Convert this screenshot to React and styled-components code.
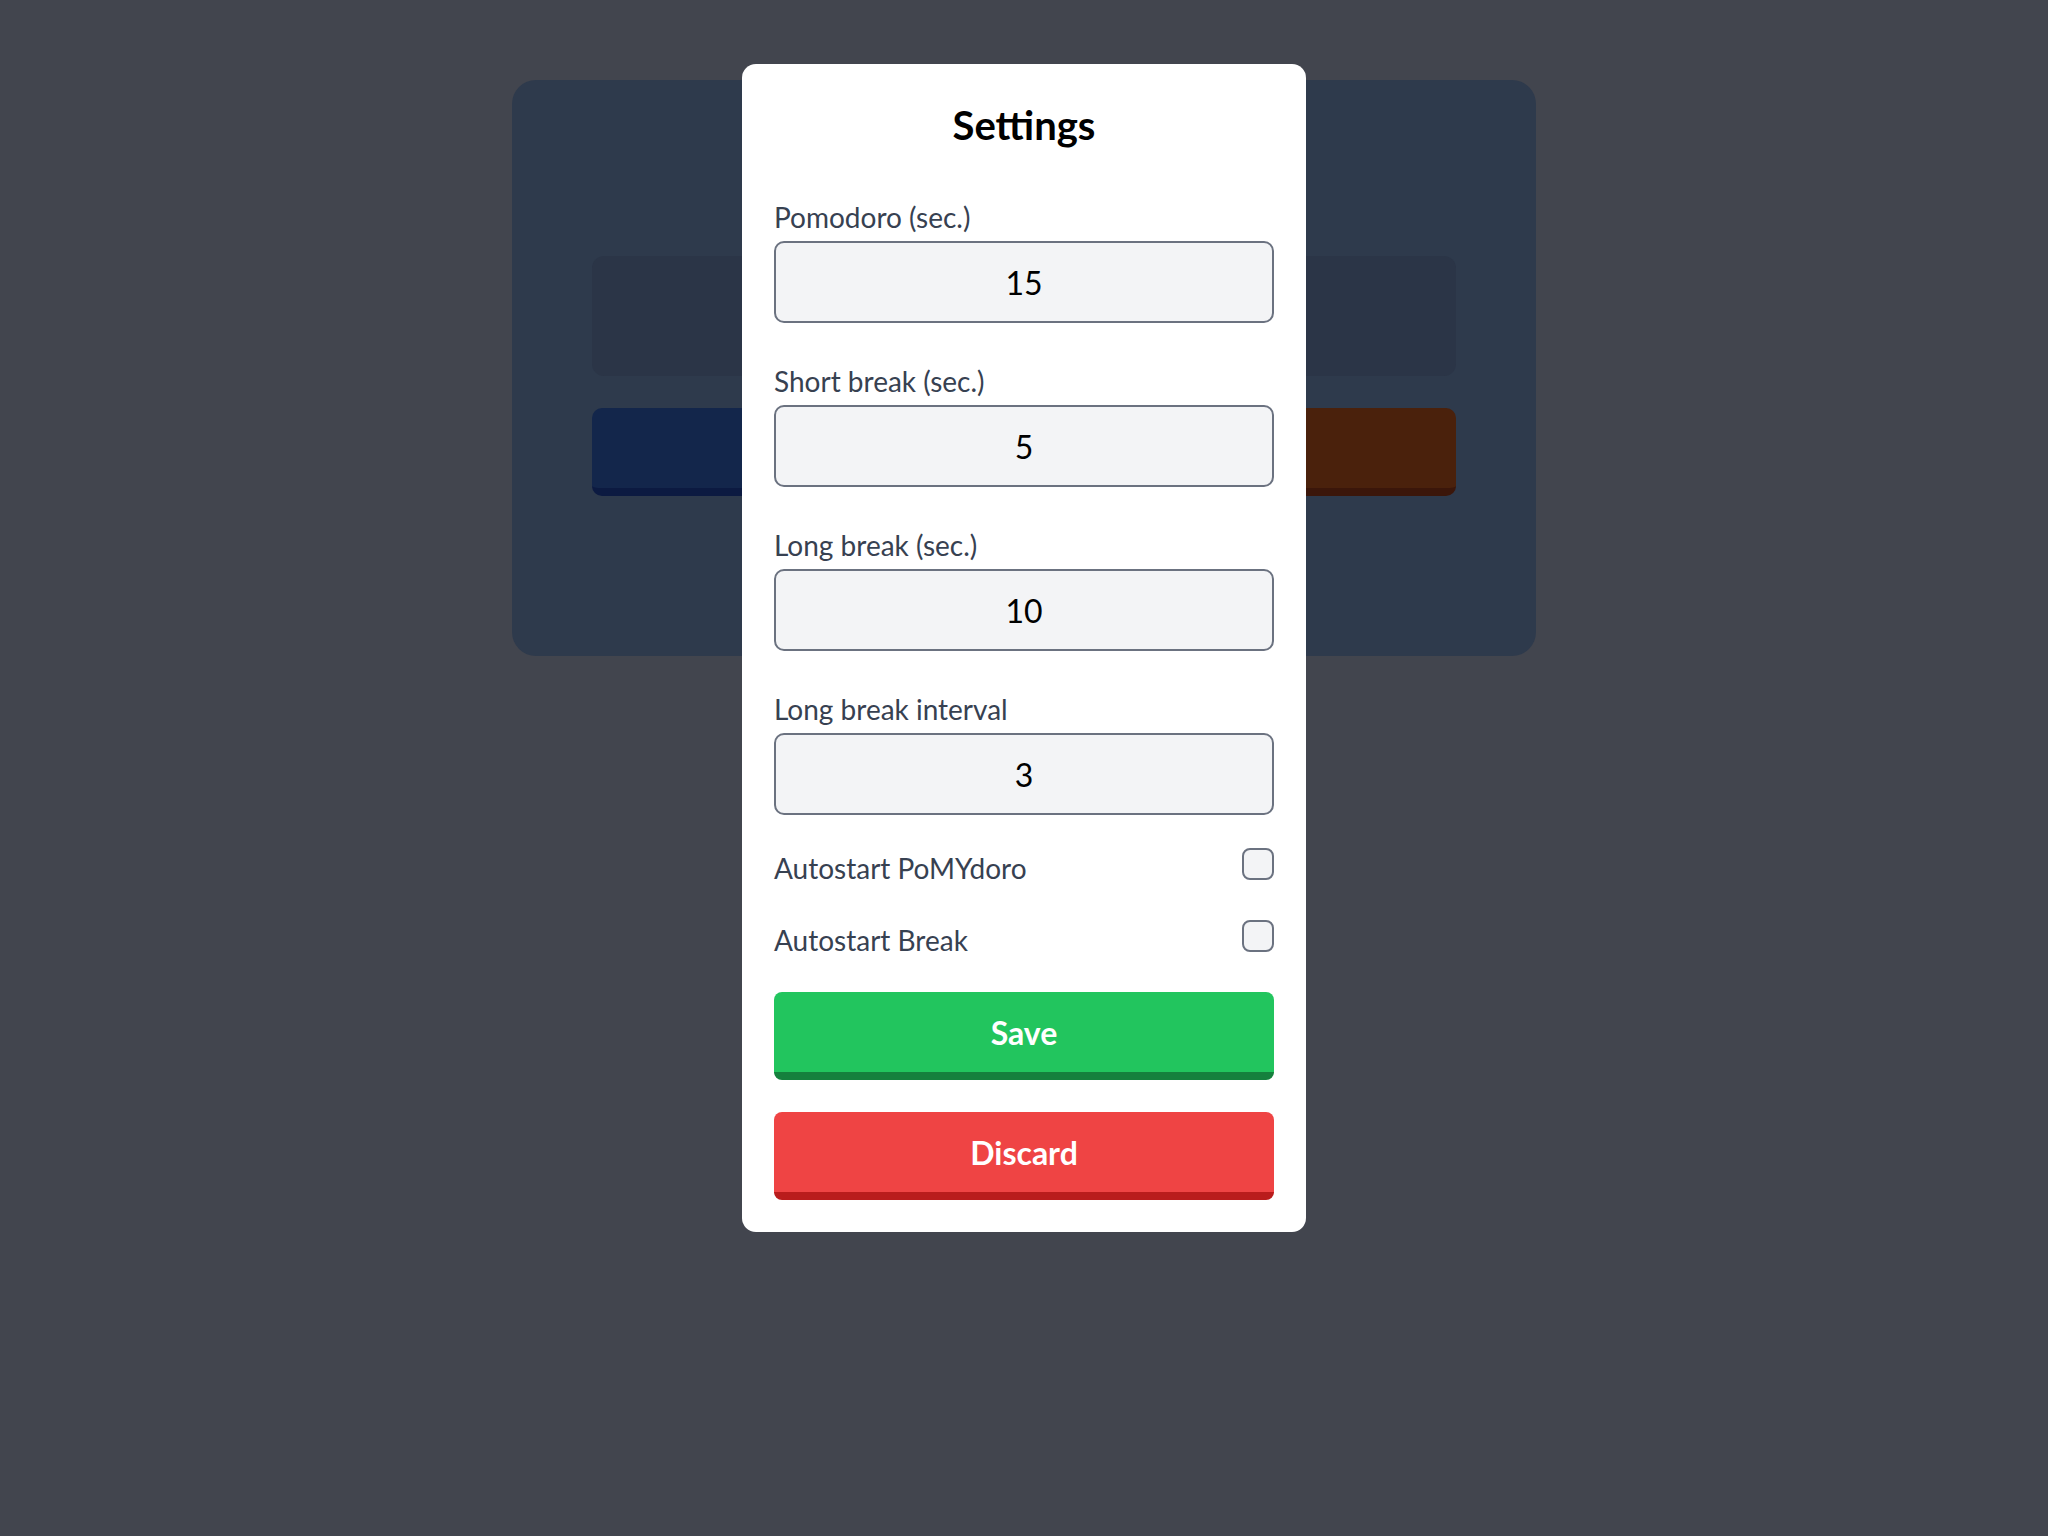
import React from "react";
import styled, { createGlobalStyle } from "styled-components";

const GlobalStyle = createGlobalStyle`
  html, body {
    margin: 0;
    padding: 0;
    background: #42454e;
    font-family: Lato, "Noto Sans", sans-serif;
  }
  * { box-sizing: border-box; }
`;

const Page = styled.div`
  min-height: 1536px;
  display: flex;
  justify-content: center;
  padding-top: 80px;
`;

const TimerCard = styled.div`
  width: 1024px;
  height: 576px;
  background: #2e3a4c;
  border-radius: 24px;
  padding: 176px 80px 0;
  display: flex;
  flex-direction: column;
  gap: 32px;
`;

const Display = styled.div`
  height: 120px;
  background: #2b3547;
  border-radius: 12px;
`;

const Controls = styled.div`
  display: flex;
  justify-content: space-between;
  gap: 64px;
`;

const ControlButton = styled.div`
  flex: 1;
  height: 88px;
  border-radius: 10px;
  background: ${(p) => p.bg};
  border-bottom: 8px solid ${(p) => p.shade};
`;

const Overlay = styled.div`
  position: fixed;
  inset: 0;
  display: flex;
  justify-content: center;
  align-items: flex-start;
  padding-top: 64px;
`;

const Modal = styled.div`
  width: 564px;
  background: #ffffff;
  border-radius: 14px;
  padding: 32px;
  display: flex;
  flex-direction: column;
`;

const Title = styled.h2`
  margin: 0 0 46px;
  text-align: center;
  font-size: 40px;
  line-height: 58px;
  font-weight: 700;
  color: #000;
`;

const Field = styled.label`
  display: flex;
  flex-direction: column;
  margin-bottom: ${(p) => p.$gap}px;
`;

const FieldLabel = styled.span`
  font-size: 28px;
  line-height: 34px;
  color: #374151;
  margin-bottom: 7px;
`;

const NumberInput = styled.input`
  height: 82px;
  width: 100%;
  background: #f3f4f6;
  border: 2px solid #6b7280;
  border-radius: 10px;
  text-align: center;
  font-family: inherit;
  font-size: 32px;
  color: #000;
  outline: none;
  padding: 0;
  -moz-appearance: textfield;

  &::-webkit-inner-spin-button,
  &::-webkit-outer-spin-button {
    -webkit-appearance: none;
    margin: 0;
  }
`;

const ToggleRow = styled.label`
  display: flex;
  justify-content: space-between;
  align-items: center;
  margin-bottom: ${(p) => p.$gap}px;
`;

const ToggleText = styled.span`
  padding-top: 8px;
  font-size: 28px;
  line-height: 34px;
  color: #374151;
`;

const Check = styled.input`
  appearance: none;
  margin: 0;
  width: 32px;
  height: 32px;
  background: #f3f4f6;
  border: 2px solid #6b7280;
  border-radius: 8px;
`;

const ActionButton = styled.button`
  height: 88px;
  width: 100%;
  border: none;
  border-bottom: 8px solid ${(p) => p.shade};
  border-radius: 8px;
  background: ${(p) => p.bg};
  color: #fff;
  font-family: inherit;
  font-size: 32px;
  font-weight: 700;
  padding: 0;
  margin-bottom: ${(p) => p.$gap || 0}px;
`;

const fields = [
  { label: "Pomodoro (sec.)", value: 15 },
  { label: "Short break (sec.)", value: 5 },
  { label: "Long break (sec.)", value: 10 },
  { label: "Long break interval", value: 3 },
];

export default function App() {
  return (
    <>
      <GlobalStyle />
      <Page>
        <TimerCard>
          <Display />
          <Controls>
            <ControlButton bg="#13264b" shade="#0c1a41" />
            <ControlButton bg="#4a210c" shade="#3b160a" />
          </Controls>
        </TimerCard>
      </Page>
      <Overlay>
        <Modal>
          <Title>Settings</Title>
          {fields.map((f, i) => (
            <Field key={f.label} $gap={i === fields.length - 1 ? 28 : 41}>
              <FieldLabel>{f.label}</FieldLabel>
              <NumberInput type="number" defaultValue={f.value} />
            </Field>
          ))}
          <ToggleRow $gap={30}>
            <ToggleText>Autostart PoMYdoro</ToggleText>
            <Check type="checkbox" />
          </ToggleRow>
          <ToggleRow $gap={35}>
            <ToggleText>Autostart Break</ToggleText>
            <Check type="checkbox" />
          </ToggleRow>
          <ActionButton bg="#22c55e" shade="#15803d" $gap={32}>
            Save
          </ActionButton>
          <ActionButton bg="#ef4444" shade="#b91c1c">
            Discard
          </ActionButton>
        </Modal>
      </Overlay>
    </>
  );
}
